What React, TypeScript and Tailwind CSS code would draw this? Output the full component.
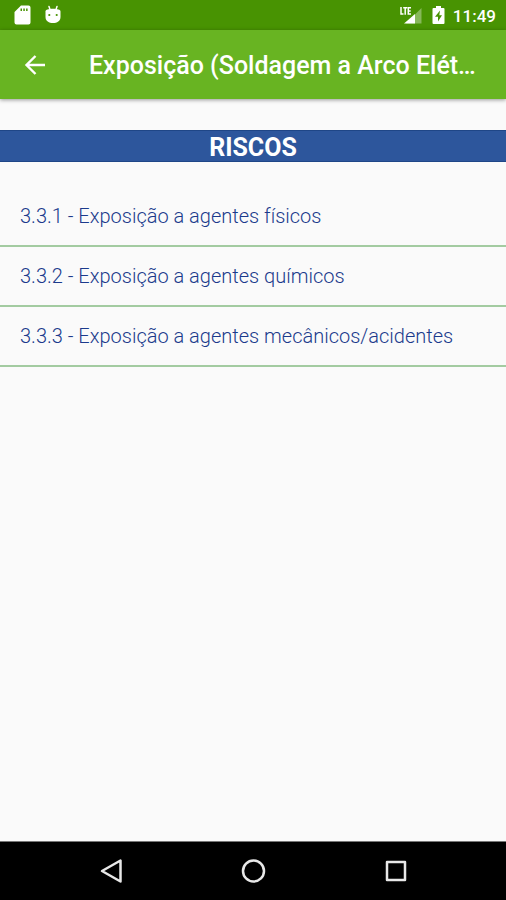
interface RiskItem {
  id: string;
  label: string;
}

const risks: RiskItem[] = [
  { id: "3.3.1", label: "Exposição a agentes físicos" },
  { id: "3.3.2", label: "Exposição a agentes químicos" },
  { id: "3.3.3", label: "Exposição a agentes mecânicos/acidentes" },
];

function StatusBar() {
  return (
    <div className="flex h-[30px] items-center justify-between bg-[#489302] pl-3.5 pr-2.5 text-white">
      <div className="flex items-center gap-3.5">
        {/* sd card */}
        <svg width="17" height="20" viewBox="0 0 17 20" fill="currentColor">
          <path
            fillRule="evenodd"
            d="M7 0.500h7.500a2 2 0 0 1 2 2v15a2 2 0 0 1-2 2h-12a2 2 0 0 1-2-2V7zM6.500 3.500v2.500h1.500v-2.500zM9.300 3.500v2.500h1.500v-2.500zM12.100 3.500v2.500h1.500v-2.500z"
          />
        </svg>
        {/* android head */}
        <svg width="16" height="20" viewBox="0 0 16 20">
          <path d="M4 1.500L5.500 6M12 1.500L10.500 6" stroke="currentColor" strokeWidth="1.500" strokeLinecap="round" />
          <path d="M0.500 6.500C0.500 4.800 3.500 3.800 8 3.800s7.500 1 7.500 2.700v5.500c0 4-3.500 6-7.500 6s-7.500-2-7.500-6z" fill="currentColor" />
          <circle cx="4.300" cy="10" r="1.100" fill="#489302" />
          <circle cx="11.700" cy="10" r="1.100" fill="#489302" />
        </svg>
      </div>
      <div className="flex items-center">
        {/* LTE signal */}
        <svg className="mr-2.5" width="23" height="20" viewBox="0 0 23 20">
          <path d="M22.500 3v15.500H7z" fill="currentColor" fillOpacity="0.35" />
          <path d="M16 9v9.500H5z" fill="currentColor" />
          <path d="M2 2v7h2.500M4.200 2.700h4M6.200 2.700v7M12 2.700H9.300v6.300H12M9.300 5.900h2.400" stroke="currentColor" strokeWidth="1.500" fill="none" />
        </svg>
        {/* battery charging */}
        <svg className="mr-2" width="13" height="20" viewBox="0 0 13 20">
          <path d="M4 1h5v2h2.500a1 1 0 0 1 1 1v14a1 1 0 0 1-1 1h-10a1 1 0 0 1-1-1V4a1 1 0 0 1 1-1H4z" fill="currentColor" />
          <path d="M8 5.500L3 11.800h3V16.500l4-6.300H7.300z" fill="#489302" />
        </svg>
        <span className="pt-0.5 text-[17px] leading-6 font-medium">11:49</span>
      </div>
    </div>
  );
}

function Toolbar() {
  return (
    <header className="relative flex h-[69px] items-center bg-[#68b422] pl-[23px] pr-4 text-white shadow-[0_1px_4px_rgba(0,0,0,0.4)]">
      <button type="button" aria-label="Voltar" className="mr-[42px] shrink-0">
        <svg width="24" height="24" viewBox="0 0 24 24" fill="none" stroke="currentColor" strokeWidth="2.400">
          <path d="M22 12H4M12.500 3L3.500 12l9 9" />
        </svg>
      </button>
      <h1 className="whitespace-nowrap pt-0.5 text-[25px] leading-8 font-medium">
        Exposição (Soldagem a Arco Elét…
      </h1>
    </header>
  );
}

function NavBar() {
  return (
    <nav className="flex h-[59px] items-center justify-center border-t border-[#777777] bg-black text-[#e8e8e8]">
      <button type="button" aria-label="Voltar" className="flex w-[142px] justify-center">
        <svg width="26" height="26" viewBox="0 0 26 26" fill="none" stroke="currentColor" strokeWidth="2.500" strokeLinejoin="round">
          <path d="M22.500 2.500v21L4 13z" />
        </svg>
      </button>
      <button type="button" aria-label="Início" className="flex w-[142px] justify-center">
        <svg width="26" height="26" viewBox="0 0 26 26" fill="none" stroke="currentColor" strokeWidth="2.500">
          <circle cx="13.500" cy="13" r="10.500" />
        </svg>
      </button>
      <button type="button" aria-label="Recentes" className="flex w-[142px] justify-center">
        <svg width="26" height="26" viewBox="0 0 26 26" fill="none" stroke="currentColor" strokeWidth="2.500" strokeLinejoin="round">
          <rect x="5" y="4" width="18" height="18" />
        </svg>
      </button>
    </nav>
  );
}

export default function App() {
  return (
    <div className="flex min-h-screen flex-col bg-[#fafafa] font-['Roboto',sans-serif]">
      <StatusBar />
      <Toolbar />
      <main className="flex-1 pt-[31px]">
        <h2 className="border-y border-[#1f4687] bg-[#2d569c] pt-1 text-center text-[25px] leading-[26px] font-bold text-white">
          RISCOS
        </h2>
        <ul className="pt-[25px]">
          {risks.map((risk) => (
            <li key={risk.id} className="border-b-2 border-[#a3cba1]">
              <a href={`#${risk.id}`} className="block px-5 py-4 text-xl leading-[26px] font-light text-[#1b3a8c]">
                {risk.id} - {risk.label}
              </a>
            </li>
          ))}
        </ul>
      </main>
      <NavBar />
    </div>
  );
}
